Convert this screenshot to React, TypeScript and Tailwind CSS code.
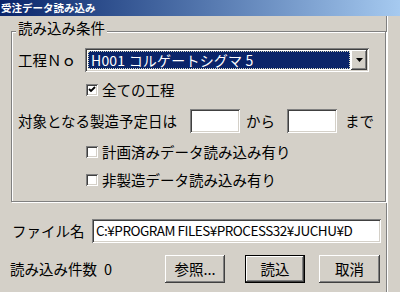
import React from "react";

const sunken =
  "shadow-[inset_1px_1px_0_#808080,inset_-1px_-1px_0_#ffffff,inset_2px_2px_0_#404040,inset_-2px_-2px_0_#d4d0c8]";
const raised =
  "shadow-[inset_-1px_-1px_0_#404040,inset_1px_1px_0_#ffffff,inset_-2px_-2px_0_#808080,inset_2px_2px_0_#d4d0c8]";

function CheckBox({ checked }: { checked?: boolean }) {
  return (
    <div className={`w-[12px] h-[12px] bg-white shrink-0 flex items-center justify-center ${sunken}`}>
      {checked && (
        <svg width="8" height="8" viewBox="0 0 8 8" className="block">
          <path d="M1 3 L3 5 L7 1" stroke="#000" strokeWidth="1.8" fill="none" />
        </svg>
      )}
    </div>
  );
}

function Button({ label, def, w = "w-[60px]" }: { label: string; def?: boolean; w?: string }) {
  if (def) {
    return (
      <div className={`${w} h-[28px] border border-black flex`}>
        <div className={`flex-1 flex items-center justify-center ${raised}`}>{label}</div>
      </div>
    );
  }
  return <div className={`${w} h-[28px] flex items-center justify-center ${raised}`}>{label}</div>;
}

export default function App() {
  return (
    <div className="w-[400px] h-[292px] bg-[#d4d0c8] overflow-hidden font-['Noto_Sans_CJK_JP',sans-serif] text-[14.5px] leading-none text-black">
      <div className="h-[16px] bg-linear-to-r from-[#0a246a] to-[#a6caf0] flex items-center pl-[1px] text-white font-bold text-[10.5px]">
        受注データ読み込み
      </div>
      <div className="flex">
        <div className="w-[387px] h-[276px] border-r border-[#808080]">
          <fieldset className="ml-[11px] mt-[3px] w-[375px] h-[183px] border border-[#808080] shadow-[inset_1px_1px_0_#ffffff,1px_1px_0_#ffffff]">
            <legend className="ml-[4px] px-[2px] leading-[18px] pb-[6px] bg-[#d4d0c8]">読み込み条件</legend>
            <div className="mt-[5px] h-[24px] flex items-center">
              <div className="w-[73px] pl-[6px]">工程Ｎｏ</div>
              <div className={`w-[284px] h-[24px] bg-white flex p-[2px] ${sunken}`}>
                <div className="flex-1 p-[1px]">
                  <div className="h-full bg-[#0a246a] border border-dotted border-[#d8d8c0] text-white flex items-center pl-[2px] text-[14px] tracking-[0.2px]">
                    H001 コルゲートシグマ 5
                  </div>
                </div>
                <div className={`w-[16px] h-full flex items-center justify-center bg-[#d4d0c8] ${raised}`}>
                  <svg width="7" height="4" viewBox="0 0 7 4">
                    <path d="M0 0 H7 L3.5 4 Z" fill="#000" />
                  </svg>
                </div>
              </div>
            </div>
            <div className="mt-[8px] h-[20px] flex items-center pl-[74px]">
              <CheckBox checked />
              <span className="ml-[4px]">全ての工程</span>
            </div>
            <div className="mt-[9px] h-[24px] flex items-center pl-[6px]">
              <div className="w-[172px]">対象となる製造予定日は</div>
              <div className={`w-[50px] h-[24px] bg-white ${sunken}`} />
              <div className="w-[47px] pl-[6px]">から</div>
              <div className={`w-[50px] h-[24px] bg-white ${sunken}`} />
              <div className="pl-[8px]">まで</div>
            </div>
            <div className="mt-[9px] h-[20px] flex items-center pl-[74px]">
              <CheckBox />
              <span className="ml-[4px]">計画済みデータ読み込み有り</span>
            </div>
            <div className="mt-[8px] h-[20px] flex items-center pl-[74px]">
              <CheckBox />
              <span className="ml-[4px]">非製造データ読み込み有り</span>
            </div>
          </fieldset>
          <div className="mt-[17px] h-[24px] flex items-center">
            <div className="w-[92px] pl-[12px]">ファイル名</div>
            <div className={`w-[289px] h-[24px] bg-white flex items-center pl-[4px] text-[13.5px] tracking-[-0.5px] ${sunken}`}>
              C:¥PROGRAM FILES¥PROCESS32¥JUCHU¥D
            </div>
          </div>
          <div className="mt-[12px] h-[28px] flex items-center">
            <div className="w-[165px] pl-[10px] flex">
              <span>読み込み件数</span>
              <span className="ml-[7px]">0</span>
            </div>
            <Button label="参照..." />
            <div className="w-[20px]" />
            <Button label="読込" def />
            <div className="w-[14px]" />
            <Button label="取消" w="w-[61px]" />
          </div>
        </div>
        <div className="w-px h-[276px] bg-white" />
      </div>
    </div>
  );
}
